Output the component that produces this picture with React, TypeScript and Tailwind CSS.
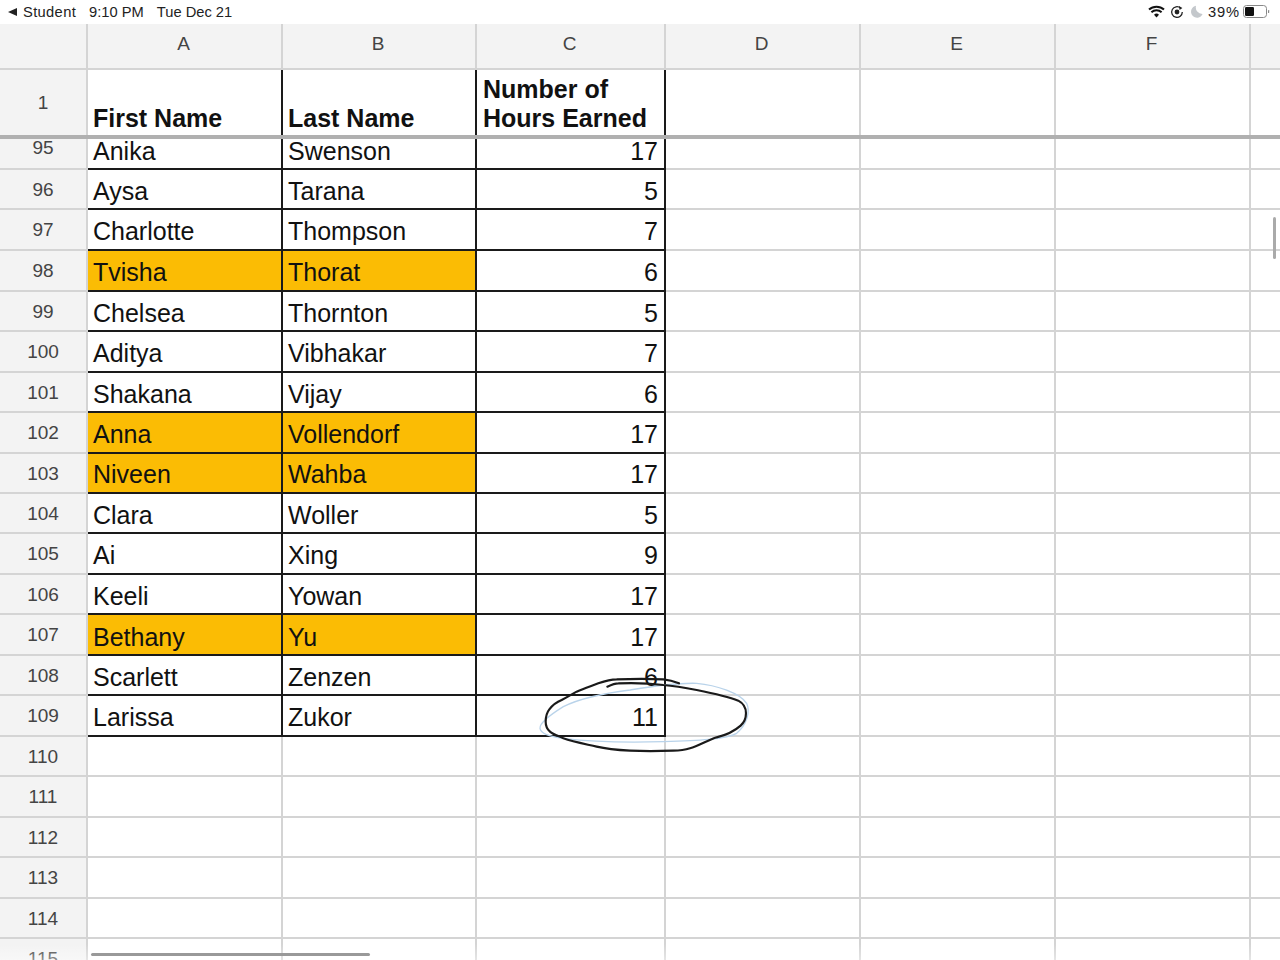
const COLS = "grid grid-cols-[88px_195px_194px_189px_195px_195px_195px_1fr]";
const SANS = "font-['Liberation_Sans',Arial,sans-serif]";

type R = { n: number; a?: string; b?: string; c?: string; y?: boolean; low?: boolean; h: string };
const rows: R[] = [
  { n: 95, a: "Anika", b: "Swenson", c: "17", h: "h-[31px]" },
  { n: 96, a: "Aysa", b: "Tarana", c: "5", low: true, h: "h-[40px]" },
  { n: 97, a: "Charlotte", b: "Thompson", c: "7", h: "h-[41px]" },
  { n: 98, a: "Tvisha", b: "Thorat", c: "6", y: true, h: "h-[41px]" },
  { n: 99, a: "Chelsea", b: "Thornton", c: "5", low: true, h: "h-[40px]" },
  { n: 100, a: "Aditya", b: "Vibhakar", c: "7", h: "h-[41px]" },
  { n: 101, a: "Shakana", b: "Vijay", c: "6", low: true, h: "h-[40px]" },
  { n: 102, a: "Anna", b: "Vollendorf", c: "17", y: true, h: "h-[41px]" },
  { n: 103, a: "Niveen", b: "Wahba", c: "17", y: true, h: "h-[40px]" },
  { n: 104, a: "Clara", b: "Woller", c: "5", low: true, h: "h-[40px]" },
  { n: 105, a: "Ai", b: "Xing", c: "9", h: "h-[41px]" },
  { n: 106, a: "Keeli", b: "Yowan", c: "17", low: true, h: "h-[40px]" },
  { n: 107, a: "Bethany", b: "Yu", c: "17", y: true, low: true, h: "h-[41px]" },
  { n: 108, a: "Scarlett", b: "Zenzen", c: "6", low: true, h: "h-[40px]" },
  { n: 109, a: "Larissa", b: "Zukor", c: "11", h: "h-[41px]" },
  { n: 110, h: "h-[40px]" },
  { n: 111, h: "h-[41px]" },
  { n: 112, h: "h-[40px]" },
  { n: 113, h: "h-[41px]" },
  { n: 114, h: "h-[40px]" },
  { n: 115, h: "h-[40px]" },
];

function Cell({ text, yellow, right, low, short }: { text?: string; yellow?: boolean; right?: boolean; low?: boolean; short?: boolean }) {
  return (
    <div
      className={`flex items-end border-r-2 border-b-2 border-[#1a1a1a] text-[25px] text-[#111] ${
        short ? "pb-[4px] leading-[25px]" : low ? "pb-[2px] leading-[29px]" : "pb-[3px] leading-[29px]"
      } ${right ? "justify-end pr-[6px]" : "pl-[5px]"} ${yellow ? "bg-[#fbbc04]" : "bg-white"}`}
    >
      {text}
    </div>
  );
}

function Blank() {
  return <div className="border-r-2 border-b-2 border-[#d4d4d4] bg-white" />;
}

function Row({ r }: { r: R }) {
  const filled = r.a !== undefined;
  const short = r.n === 95;
  return (
    <div className={`${COLS} ${r.h} shrink-0`}>
      <div className="flex items-center justify-center border-r-2 border-b-2 border-[#d4d4d4] bg-[#f3f3f3] text-[19px] text-[#444]">
        <span className={short ? "-mt-[10px]" : "mt-[2px]"}>{r.n}</span>
      </div>
      {filled ? (
        <>
          <Cell text={r.a} yellow={r.y} low={r.low} short={short} />
          <Cell text={r.b} yellow={r.y} low={r.low} short={short} />
          <Cell text={r.c} right low={r.low} short={short} />
        </>
      ) : (
        <>
          <Blank />
          <Blank />
          <Blank />
        </>
      )}
      <Blank />
      <Blank />
      <Blank />
      <div className="border-b-2 border-[#d4d4d4] bg-white" />
    </div>
  );
}

function StatusBar() {
  return (
    <div className="flex h-6 shrink-0 items-center justify-between bg-white pr-[10px] pl-2 text-[14.7px] text-[#222]">
      <div className="flex items-center">
        <svg width="10" height="10" viewBox="0 0 10 10" className="mr-[5px]">
          <polygon points="0,5 9,1 9,9" fill="#222" />
        </svg>
        <span className="mr-[13px] tracking-[0.35px]">Student</span>
        <span className="mr-[13px]">9:10 PM</span>
        <span>Tue Dec 21</span>
      </div>
      <div className="flex items-center">
        <svg width="17" height="13" viewBox="0 0 17 13" className="mr-[5px]">
          <path d="M8.5 12.6 6 9.7a3.7 3.7 0 0 1 5 0Z" fill="#111" />
          <path d="M1 4.6a11 11 0 0 1 15 0M3.4 7.3a7.6 7.6 0 0 1 10.2 0" fill="none" stroke="#111" strokeWidth="2" />
        </svg>
        <svg width="14" height="14" viewBox="0 0 14 14" className="mr-[7px]">
          <path d="M12.3 7A5.3 5.3 0 1 1 10.5 3" fill="none" stroke="#222" strokeWidth="1.3" />
          <polygon points="9,1 12.4,3 9.6,5" fill="#222" />
          <circle cx="7" cy="7" r="2.4" fill="#222" />
        </svg>
        <svg width="12" height="13" viewBox="0 0 12 13" className="mr-[5px]">
          <path d="M5 .8A6 6 0 1 0 11.6 9 6.6 6.6 0 0 1 5 .8Z" fill="#c4c8cc" />
        </svg>
        <span className="mr-[3px] tracking-[0.9px]">39%</span>
        <svg width="27" height="13" viewBox="0 0 27 13">
          <rect x=".5" y=".5" width="23" height="12" rx="3" fill="none" stroke="#888" />
          <rect x="2" y="2" width="9" height="9" rx="1.2" fill="#111" />
          <rect x="25" y="5" width="1.2" height="3" rx=".6" fill="#888" />
        </svg>
      </div>
    </div>
  );
}

export default function App() {
  return (
    <div className={`relative flex h-[960px] w-[1280px] flex-col overflow-hidden bg-white ${SANS}`}>
      <StatusBar />

      <div className={`${COLS} h-[46px] shrink-0 bg-[#f3f3f3] text-[19px] text-[#444]`}>
        <div className="border-r-2 border-b-2 border-[#d4d4d4]" />
        {["A", "B", "C", "D", "E", "F"].map((l) => (
          <div key={l} className="flex items-center justify-center border-r-2 border-b-2 border-[#d4d4d4] pr-[2px] pb-[3px]">
            {l}
          </div>
        ))}
        <div className="border-b-2 border-[#d4d4d4]" />
      </div>

      <div className={`${COLS} h-[65px] shrink-0 bg-white`}>
        <div className="flex items-center justify-center border-r-2 border-[#d4d4d4] bg-[#f3f3f3] pt-[2px] text-[19px] text-[#444]">
          1
        </div>
        <div className="flex items-end border-r-2 border-[#1a1a1a] pb-[2px] pl-[5px] text-[25px] leading-[29px] font-bold text-[#111]">
          First Name
        </div>
        <div className="flex items-end border-r-2 border-[#1a1a1a] pb-[2px] pl-[5px] text-[25px] leading-[29px] font-bold text-[#111]">
          Last Name
        </div>
        <div className="flex items-end border-r-2 border-[#1a1a1a] pb-[2px] pl-[6px] text-[25px] leading-[29px] font-bold text-[#111]">
          Number of Hours Earned
        </div>
        <div className="border-r-2 border-[#d4d4d4]" />
        <div className="border-r-2 border-[#d4d4d4]" />
        <div className="border-r-2 border-[#d4d4d4]" />
        <div />
      </div>

      <div className="h-1 shrink-0 bg-[#b0b0b0]" />

      <div className="flex min-h-0 flex-1 flex-col overflow-hidden">
        {rows.map((r) => (
          <Row key={r.n} r={r} />
        ))}
      </div>

      {/* bottom fade */}
      <div className="pointer-events-none absolute right-0 bottom-0 left-0 h-[16px] bg-gradient-to-b from-transparent to-white/40" />

      {/* scroll bars */}
      <div className="absolute top-[953px] left-[91px] h-[3px] w-[279px] rounded-full bg-[#999]" />
      <div className="absolute top-[217px] left-[1273px] h-[42px] w-[3px] rounded-full bg-[#aaa]" />

      {/* pen annotation */}
      <svg className="pointer-events-none absolute top-0 left-0" width="1280" height="960" viewBox="0 0 1280 960">
        <g transform="translate(530 660) scale(0.3333)" fill="none" strokeLinecap="round" strokeLinejoin="round">
          <path
            d="M30 205C28 190 60 165 100 140C150 115 220 100 300 90C360 80 430 68 500 70C560 75 630 100 650 130C662 155 650 195 620 220C590 238 500 242 400 245C300 248 180 245 100 235C60 230 32 222 30 205Z"
            stroke="#b9d3ea"
            strokeWidth="4"
          />
          <path
            d="M232 80C245 74 255 70 265 70C310 68 360 70 400 75C440 78 470 84 500 90C540 98 590 108 625 122C640 130 648 145 648 160C648 175 642 188 632 197C615 212 590 225 560 232C535 240 505 258 480 265C465 270 450 272 430 272C380 274 340 274 300 272C260 270 225 266 200 260C165 252 130 246 100 235C80 226 68 222 60 215C50 206 47 195 47 185C47 170 50 158 58 148C68 135 80 126 95 120C110 112 125 103 140 95C165 84 185 78 205 70C225 63 240 58 260 58C310 56 360 56 400 58C420 60 432 64 447 70"
            stroke="#1a1a1a"
            strokeWidth="6.5"
          />
        </g>
      </svg>
    </div>
  );
}
